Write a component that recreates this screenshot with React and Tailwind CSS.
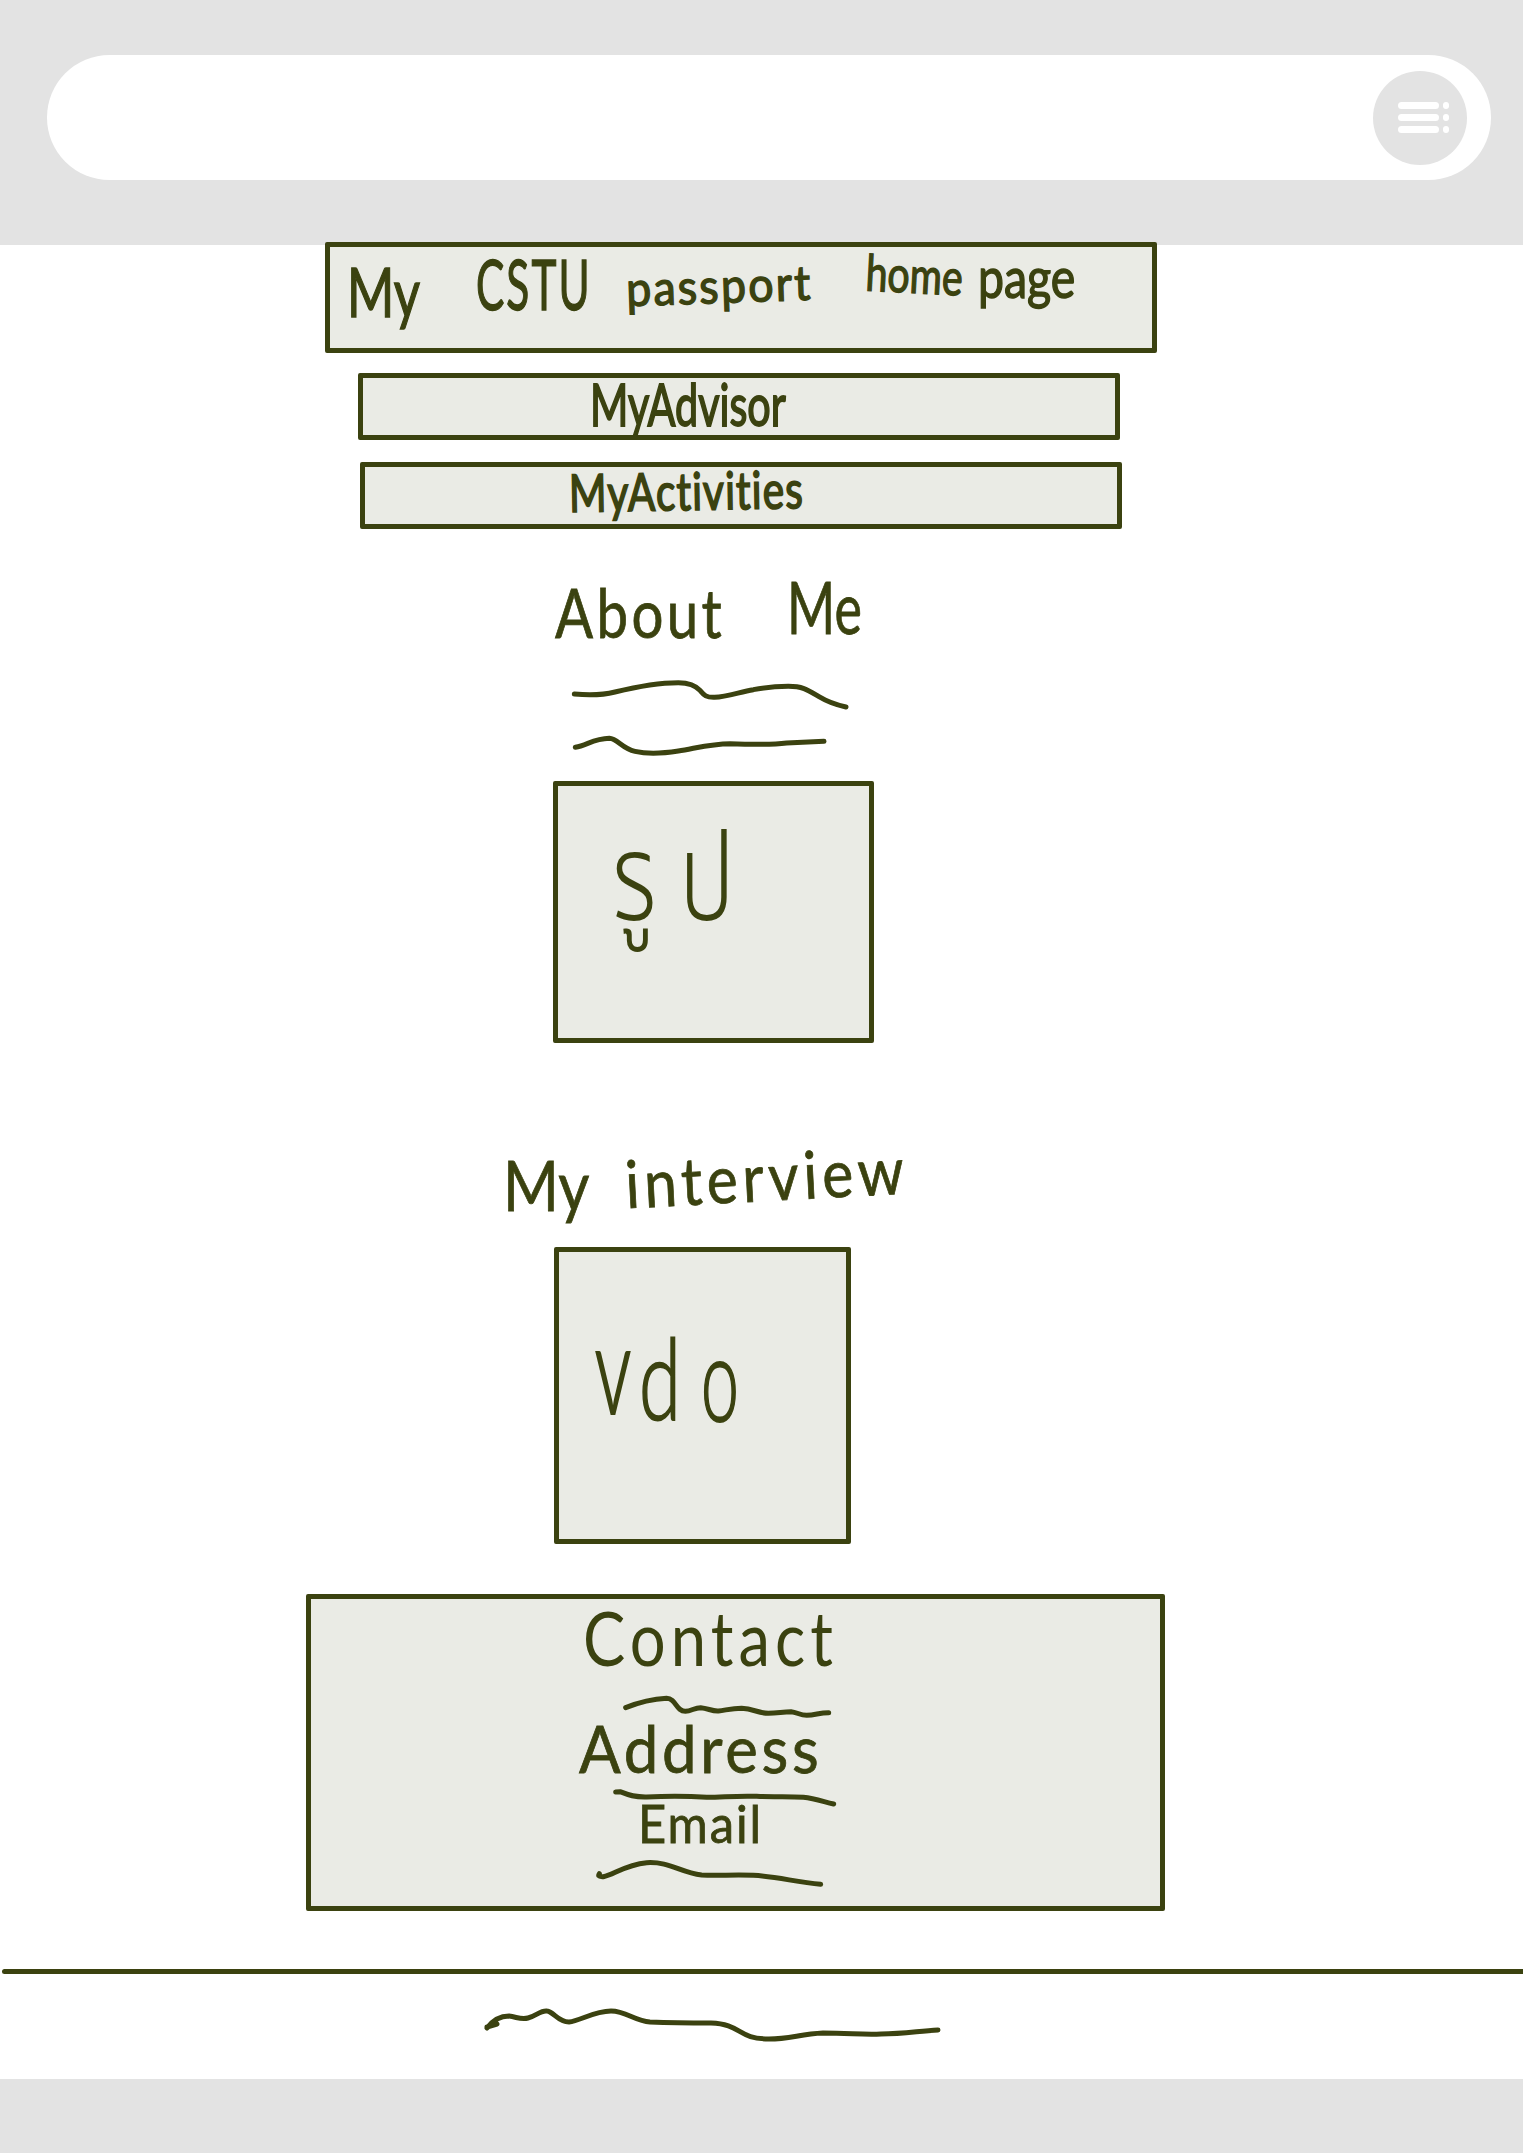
import { useLayoutEffect, useRef, useState } from "react";

// A word stretched horizontally so that it fills the given width.
function Word({ children, width, className = "", rotate = 0 }) {
  const inner = useRef(null);
  const [scale, setScale] = useState(1);

  useLayoutEffect(() => {
    setScale(width / inner.current.offsetWidth);
  }, [width]);

  return (
    <span className={`block shrink-0 leading-none ${className}`} style={{ width, rotate: `${rotate}deg` }}>
      <span
        ref={inner}
        className="inline-block origin-left whitespace-nowrap"
        style={{ transform: `scaleX(${scale})` }}
      >
        {children}
      </span>
    </span>
  );
}

function Squiggle({ d, viewBox, className, strokeWidth = 15 }) {
  return (
    <svg
      viewBox={viewBox}
      className={`block shrink-0 ${className}`}
      fill="none"
      stroke="#3b4210"
      strokeWidth={strokeWidth}
      strokeLinecap="round"
      strokeLinejoin="round"
      aria-hidden="true"
    >
      <path d={d} />
    </svg>
  );
}

function Panel({ className, children }) {
  return (
    <div className={`shrink-0 rounded-[2px] border-[5px] border-[#3b4210] bg-[#eaebe5] ${className}`}>
      {children}
    </div>
  );
}

function MenuButton() {
  return (
    <button type="button" aria-label="Menu" className="flex size-[94px] items-center justify-center rounded-full bg-[#e3e3e3] pl-[7px]">
      <span className="flex flex-col gap-[5.5px]">
        {[0, 1, 2].map((row) => (
          <span key={row} className="flex items-center gap-1">
            <span className="h-[6.5px] w-[41px] rounded-full bg-white" />
            <span className="size-[6.5px] rounded-full bg-white" />
          </span>
        ))}
      </span>
    </button>
  );
}

export default function App() {
  return (
    <div className="flex h-[2154px] w-[1523px] flex-col overflow-hidden bg-white font-['Lato','Noto_Sans',sans-serif] text-[#3b4210] [-webkit-text-stroke:0.8px_#3b4210]">
      <header className="h-[245px] shrink-0 bg-[#e3e3e3] pt-[55px] pr-8 pl-[47px]">
        <div className="flex h-[125px] items-center justify-end rounded-full bg-white pr-6">
          <MenuButton />
        </div>
      </header>

      <main className="-mt-[3px] flex h-[1669px] shrink-0 flex-col">
        <Panel className="ml-[325px] h-[111px] w-[832px]">
          <h1 className="flex items-start pl-[17px] [-webkit-text-stroke:1.4px_#3b4210]">
            <Word width={73} className="mt-[11px] text-[67px]">My</Word>
            <Word width={116} className="mt-[1px] ml-[56px] text-[70px] tracking-[0.05em]">CSTU</Word>
            <Word width={186} rotate={-2} className="mt-[14px] ml-[34px] text-[48px] tracking-[0.05em]">passport</Word>
            <Word width={97} rotate={3} className="mt-[2px] ml-[54px] text-[50px]">home</Word>
            <Word width={97} className="mt-[2px] ml-[15px] text-[56px]">page</Word>
          </h1>
        </Panel>

        <nav className="flex flex-col [-webkit-text-stroke:1.8px_#3b4210]">
          <Panel className="mt-5 ml-[358px] h-[67px] w-[762px]">
            <Word width={196} className="-mt-[3px] ml-[227px] text-[58px]">MyAdvisor</Word>
          </Panel>
          <Panel className="mt-[22px] ml-[360px] h-[67px] w-[762px]">
            <Word width={235} rotate={-1} className="-mt-[3px] ml-[204px] text-[52px] tracking-[0.03em]">MyActivities</Word>
          </Panel>
        </nav>

        <section className="flex flex-col pt-[39px]">
          <h2 className="flex h-[110px] items-start pl-[555px]">
            <Word width={170} className="mt-[10px] text-[68px] tracking-[0.06em]">About</Word>
            <Word width={75} className="mt-[2px] ml-[62px] text-[72px]">Me</Word>
          </h2>
          <Squiggle
            viewBox="90 354 840 99"
            className="ml-[570px] h-[33px] w-[280px]"
            d="M103 402C145 406 185 406 225 396C290 380 350 368 415 368C448 368 467 376 481 392C492 405 498 413 524 412C560 410 600 396 640 389C680 381 710 379 745 379C790 379 805 391 837 410C865 427 885 434 918 441"
          />
          <Squiggle
            viewBox="90 525 780 63"
            className="mt-6 ml-[570px] h-[21px] w-[260px]"
            d="M106 562C140 557 160 536 208 535C233 536 245 565 285 574C320 582 370 580 415 573C470 564 515 551 570 551C620 553 690 555 740 549L852 544"
          />
          <Panel className="mt-[25px] ml-[553px] h-[262px] w-[321px]">
            <Word
              width={145}
              className="mt-[36px] ml-[54px] font-['Noto_Sans_Thai','Loma','Noto_Sans',sans-serif] text-[122px] font-light tracking-[0.24em] [-webkit-text-stroke:0px]"
            >
              รูป
            </Word>
          </Panel>
        </section>

        <section className="flex flex-col pt-[106px]">
          <h2 className="flex h-[98px] items-start pl-[503px]">
            <Word width={86} className="text-[70px]">My</Word>
            <Word width={283} rotate={-3} className="-mt-[6px] ml-[36px] text-[66px] tracking-[0.08em]">interview</Word>
          </h2>
          <Panel className="ml-[554px] h-[297px] w-[297px]">
            <div className="flex items-start pt-[69px] pl-[36px]">
              <Word width={36} className="mt-[14px] text-[90px] [-webkit-text-stroke:0px]">V</Word>
              <Word width={42} className="ml-[8px] text-[112px] font-light [-webkit-text-stroke:2px_#3b4210]">d</Word>
              <Word width={38} className="-mt-[2px] ml-[20px] text-[116px] font-light [-webkit-text-stroke:2px_#3b4210]">o</Word>
            </div>
          </Panel>
        </section>

        <Panel className="mt-[50px] ml-[306px] flex h-[317px] w-[859px] flex-col">
          <div className="flex h-24 items-start pl-[272px] [-webkit-text-stroke:0px]">
            <Word width={255} className="text-[76px] tracking-[0.08em]">Contact</Word>
          </div>
          <Squiggle
            viewBox="243 345 639 72"
            className="ml-[310px] h-6 w-[213px]"
            d="M257 383C300 366 345 357 380 355C408 355 408 394 436 394C455 393 463 383 482 383C505 385 515 394 535 393C560 390 575 385 605 385C640 386 655 400 685 400C715 399 730 395 753 395C772 397 780 406 800 406C827 405 838 398 866 398"
          />
          <div className="flex h-[69px] items-start pl-[268px]">
            <Word width={243} className="-mt-[3px] text-[65px] tracking-[0.06em]">Address</Word>
          </div>
          <Squiggle
            viewBox="213 624 678 57"
            className="ml-[300px] h-[19px] w-[226px]"
            d="M227 636L240 635C265 645 285 652 320 651C385 648 440 648 500 652C570 650 600 647 650 649C700 652 740 648 790 652C825 656 850 665 881 672"
          />
          <div className="flex h-[52px] items-start pl-[327px]">
            <Word width={125} className="-mt-[10px] text-[52px] tracking-[0.04em]">Email</Word>
          </div>
          <Squiggle
            viewBox="162 837 690 87"
            className="ml-[283px] h-[29px] w-[230px]"
            d="M178 881C175 886 173 891 190 890C220 885 255 854 320 848C390 844 420 878 485 885C535 888 580 883 640 886C710 889 765 906 842 913"
          />
        </Panel>
      </main>

      <footer className="flex h-[243px] shrink-0 flex-col">
        <div className="mt-[58px] ml-[2px] h-[5px] shrink-0 rounded-l-full bg-[#3b4210]" />
        <Squiggle
          viewBox="480 2004 466 42"
          strokeWidth={5}
          className="mt-[30px] ml-[480px] h-[42px] w-[466px]"
          d="M487 2028C493 2020 500 2016 509 2016C517 2017 521 2020 528 2018C536 2016 541 2010 547 2011C554 2012 558 2022 569 2022C580 2021 594 2011 611 2011C626 2011 635 2021 650 2022C675 2023 690 2023 711 2023C742 2024 737 2039 769 2039C790 2039 800 2034 823 2033C850 2033 863 2035 881 2034C905 2034 918 2031 938 2030M487 2027L497 2024"
        />
        <div className="mt-[33px] h-[74px] shrink-0 bg-[#e3e3e3]" />
      </footer>
    </div>
  );
}
